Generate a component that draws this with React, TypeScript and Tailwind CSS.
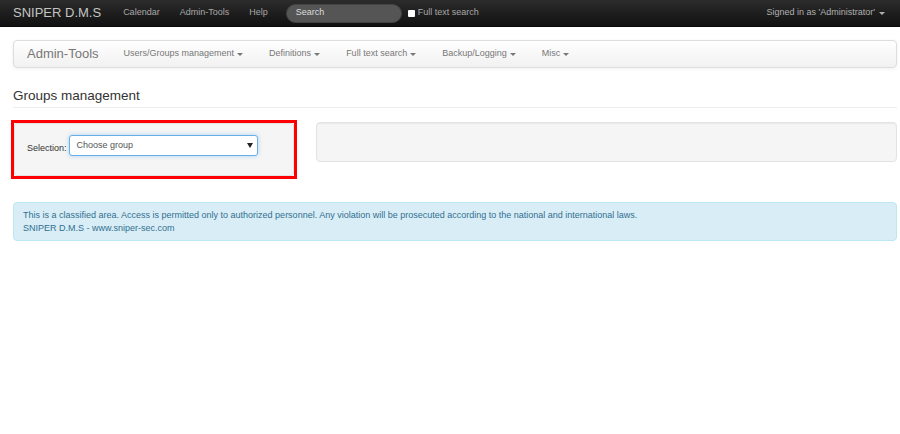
import React from 'react';

function Caret({ className = '' }: { className?: string }) {
    return <span className={`inline-block w-0 h-0 border-x-[3px] border-x-transparent border-t-[3px] ml-[3px] align-middle ${className}`} />;
}

const subItems = ['Users/Groups management', 'Definitions', 'Full text search', 'Backup/Logging', 'Misc'];

export default function App() {
    return (
        <div className="min-h-[434px] bg-white" style={{ fontFamily: '"Liberation Sans", Arial, sans-serif' }}>
            {/* top navbar */}
            <div className="h-[27px] flex items-center bg-gradient-to-b from-[#2c2c2c] to-[#111] border-b border-[#080808] pl-[13px] pr-[15px]">
                <span className="text-[13px] text-[#c4c4c4] mr-[22px]">SNIPER D.M.S</span>
                <div className="flex items-center gap-[20px] text-[9px] text-[#a8a8a8]">
                    <span>Calendar</span>
                    <span>Admin-Tools</span>
                    <span>Help</span>
                </div>
                <div className="ml-[18px] w-[116px] h-[19px] rounded-full bg-[#555] border border-[#444] flex items-center pl-[9px] text-[9px] text-[#ddd]">
                    Search
                </div>
                <div className="flex items-center ml-[6px] text-[9px] text-[#a8a8a8]">
                    <span className="w-[7px] h-[7px] bg-white rounded-[1px] mr-[3px]" />
                    Full text search
                </div>
                <div className="ml-auto flex items-center text-[9px] text-[#b0b0b0]">
                    Signed in as 'Administrator'
                    <Caret className="border-t-[#b0b0b0] ml-[4px]" />
                </div>
            </div>

            <div className="pl-[13px] pr-[3px]">
                {/* admin-tools navbar */}
                <div className="mt-[13px] h-[28px] flex items-center rounded-[4px] border border-[#ddd] bg-gradient-to-b from-white to-[#f1f1f1] shadow-[inset_0_1px_0_rgba(255,255,255,0.15),0_1px_4px_rgba(0,0,0,0.06)] pl-[13px]">
                    <span className="text-[13px] text-[#777] mr-[25px]">Admin-Tools</span>
                    <div className="flex items-center gap-[26px] text-[9px] text-[#777]">
                        {subItems.map((s) => (
                            <span key={s} className="flex items-center">
                                {s}
                                <Caret className="border-t-[#777]" />
                            </span>
                        ))}
                    </div>
                </div>

                {/* page header */}
                <div className="mt-[20px] pb-[3px] border-b border-[#eee] text-[13.5px] leading-[16px] text-[#333]">Groups management</div>

                <div className="mt-[12px] flex items-start">
                    <div className="-ml-[2px] w-[286px] border-[3px] border-[#f00]">
                        <div className="h-[53px] bg-[#f5f5f5] border border-[#e3e3e3] rounded-[3px] flex items-start pt-[11px] pl-[12px] text-[9px] text-[#333]">
                            <span className="mt-[7px] mr-[2px]">Selection:</span>
                            <div className="w-[189px] h-[21px] bg-white border border-[#66afe9] rounded-[3px] shadow-[0_0_4px_rgba(102,175,233,0.5)] flex items-center pl-[7px] pr-[4px] text-[#555]">
                                <span>Choose group</span>
                                <Caret className="ml-auto border-t-[#222] border-x-[3px] border-t-[5px]" />
                            </div>
                        </div>
                    </div>
                    <div className="ml-[19px] mt-[2px] flex-1 h-[40px] bg-[#f5f5f5] border border-[#e3e3e3] rounded-[4px] shadow-[inset_0_1px_1px_rgba(0,0,0,0.05)]" />
                </div>

                {/* info alert */}
                <div className="mt-[23px] h-[39px] bg-[#d9edf7] border border-[#bce8f1] rounded-[4px] px-[9px] pt-[6px] text-[9px] leading-[13px] text-[#31708f]">
                    <div>This is a classified area. Access is permitted only to authorized personnel. Any violation will be prosecuted according to the national and international laws.</div>
                    <div>SNIPER D.M.S - www.sniper-sec.com</div>
                </div>
            </div>
        </div>
    );
}
